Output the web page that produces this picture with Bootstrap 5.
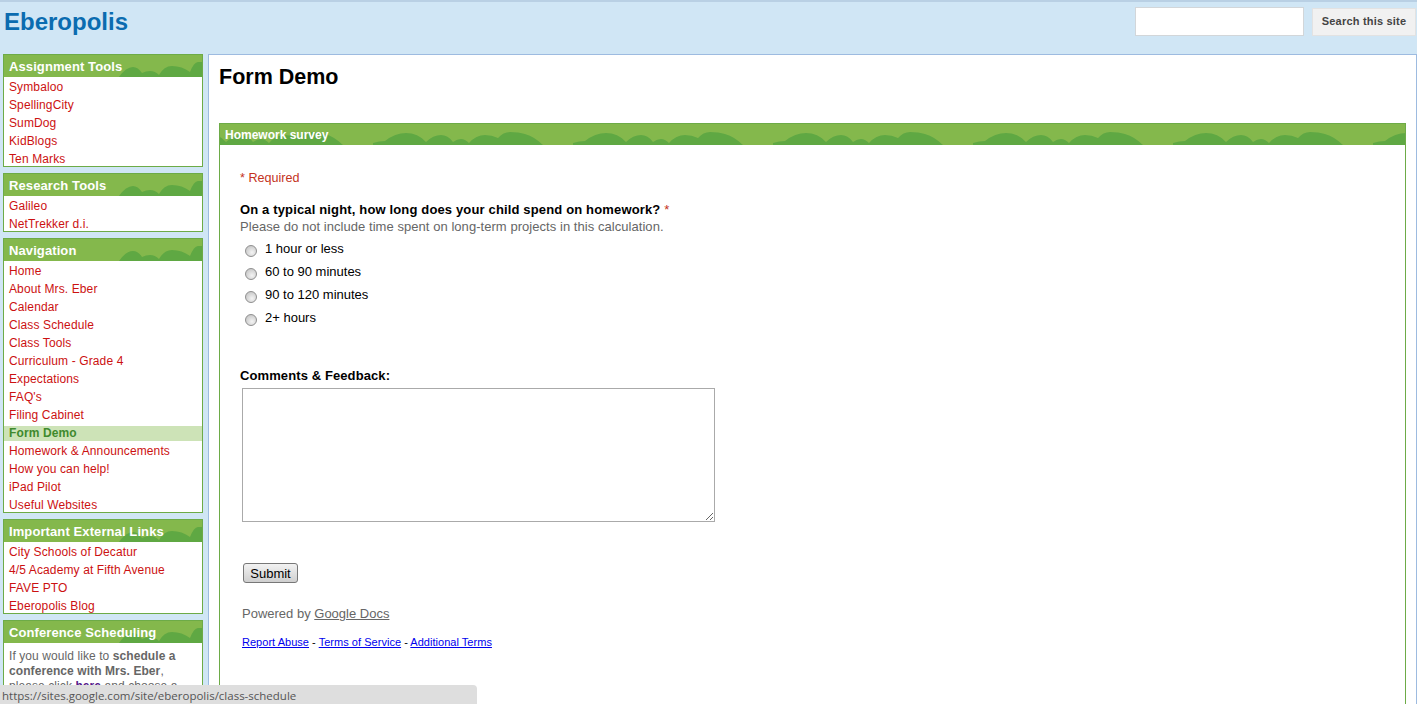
<!DOCTYPE html>
<html lang="en">
<head>
<meta charset="utf-8">
<title>Eberopolis</title>
<link href="https://cdn.jsdelivr.net/npm/bootstrap@5.3.0/dist/css/bootstrap.min.css" rel="stylesheet">
<style>
html,body{height:704px;overflow:hidden}
body{background:#d0e6f5;font-family:"Liberation Sans",Arial,sans-serif;font-size:12px;color:#000}
.site-head{height:54px;padding:7px 0 0 4px;border-top:2px solid #b9d0e4}
.site-name{font-size:24px;font-weight:700;color:#0b6cb0;line-height:26px;margin:0}
.search-box{width:169px;height:29px;border:1px solid #d2d6d9;border-radius:0;padding:0 4px;margin-top:-2px}
.search-btn{width:104px;height:28px;margin:-1px 1px 0 8px;padding:0 0 2px;background:#f1f1f1;border:1px solid #e2e2e2;border-radius:0;font-size:11px;font-weight:700;color:#444;line-height:22px;letter-spacing:.2px}
.side-col{width:200px;margin-left:3px;flex:none}
.side-panel{border:1px solid #6dab47;background:#fff;margin-bottom:6px;overflow:hidden}
.side-title{height:22px;line-height:23px;padding-left:5px;font-size:13px;letter-spacing:.1px;font-weight:700;color:#fff;margin:0;
background:#84b84c url("data:image/svg+xml,%3Csvg xmlns='http://www.w3.org/2000/svg' width='200' height='22'%3E%3Cpath fill='%235fa843' d='M115 22Q122 12 129 12Q134 12 138 18Q142 16 146 16Q151 16 155 20Q160 11 168 11Q178 11 186 17Q190 7 194 7L200 7L200 22Z'/%3E%3C/svg%3E") no-repeat 0 0}
.side-links{margin:0 0 -1px;padding:0;list-style:none;letter-spacing:.12px}
.side-links li{height:15px;line-height:15px;margin-top:3px;padding-left:5px}
.side-links a{color:#cc1111;text-decoration:none}
.side-links li.now{background:#cde3b7;font-weight:700;color:#3f8a2e}
.side-note{padding:6px 5px 0;line-height:15px;color:#666;height:60px;letter-spacing:.08px}
.side-note b{color:#666}
.side-note a{color:#551a8b;font-weight:700;text-decoration:none}
.page-box{margin-left:5px;flex:1;height:650px;background:#fff;border:1px solid #9dbbe0;border-bottom:0;padding:0 10px}
.page-title{font-size:21.5px;font-weight:700;line-height:24px;margin:10px 0 34px}
.survey-box{height:600px;border:1px solid #6dab47;border-bottom:0}
.survey-title{height:21px;line-height:22px;padding-left:5px;font-size:12px;font-weight:700;color:#fff;margin:0;
background:#84b84c url("data:image/svg+xml,%3Csvg xmlns='http://www.w3.org/2000/svg' width='200' height='21'%3E%3Cpath transform='translate(0 -1)' fill='%235fa843' d='M-3 22L0 20Q6 18 12 18Q22 10 33 10Q45 10 53 19Q60 12 68 12Q75 12 80 19Q84 16 88 16Q92 16 96 20Q103 12 112 12Q119 12 125 15Q130 9 137 9Q146 9 152 11Q162 14 170 22Z'/%3E%3C/svg%3E") repeat-x -47px 0}
.survey-body{padding:26px 0 0 20px}
.need{color:#c4321c;font-size:12.6px;line-height:15px;margin:0 0 16px}
.ask{font-size:13px;letter-spacing:.15px;font-weight:700;line-height:16px;margin:0}
.ask span{color:#c4321c;font-weight:400}
.hint{color:#666;font-size:13px;letter-spacing:.05px;line-height:16px;margin:1px 0 4px}
.pick{height:23px;padding-left:5px;gap:8px;margin:0;font-size:13px}
.pick input{width:12px;height:12px;margin:6px 0 0;flex:none;border:1px solid #8f8f8f;background:radial-gradient(circle at 60% 65%,#f4f4f4,#bcbcbc);float:none}
.pick span{line-height:15px;margin-top:2px}
.say{font-size:13px;letter-spacing:.1px;font-weight:700;line-height:16px;margin:37px 0 4px}
.say-area{display:block;width:473px;height:134px;margin-left:2px;border:1px solid #aaa;border-radius:0}
.send{display:block;width:55px;height:20px;margin:41px 0 0 3px;padding:1px 0 0;background:linear-gradient(#f2f2f2,#cfcfcf);border:1px solid #777;border-radius:3px;color:#000;font-size:13px;line-height:17px}
.made{font-size:13px;color:#666;line-height:16px;margin:23px 0 0 2px}
.made a{color:#666}
.legal{font-size:11px;letter-spacing:.03px;line-height:13px;margin:14px 0 0 2px}
.legal a{color:#00e}
.status-tip{position:fixed;left:0;bottom:0;width:477px;height:19px;background:#dedede;border-top-right-radius:4px;padding-left:2px;font-family:"Open Sans",sans-serif;font-size:11.5px;line-height:21px;color:#555}
</style>
</head>
<body>
<header class="site-head d-flex justify-content-between align-items-start">
  <h1 class="site-name">Eberopolis</h1>
  <form class="d-flex align-items-start">
    <input class="form-control search-box" type="text" aria-label="Search">
    <button class="btn search-btn" type="button">Search this site</button>
  </form>
</header>
<div class="d-flex align-items-start">
  <aside class="side-col">
    <section class="side-panel">
      <h2 class="side-title">Assignment Tools</h2>
      <ul class="side-links">
        <li><a href="#">Symbaloo</a></li><li><a href="#">SpellingCity</a></li><li><a href="#">SumDog</a></li><li><a href="#">KidBlogs</a></li><li><a href="#">Ten Marks</a></li>
      </ul>
    </section>
    <section class="side-panel">
      <h2 class="side-title">Research Tools</h2>
      <ul class="side-links">
        <li><a href="#">Galileo</a></li><li><a href="#">NetTrekker d.i.</a></li>
      </ul>
    </section>
    <section class="side-panel">
      <h2 class="side-title">Navigation</h2>
      <ul class="side-links">
        <li><a href="#">Home</a></li><li><a href="#">About Mrs. Eber</a></li><li><a href="#">Calendar</a></li><li><a href="#">Class Schedule</a></li><li><a href="#">Class Tools</a></li><li><a href="#">Curriculum - Grade 4</a></li><li><a href="#">Expectations</a></li><li><a href="#">FAQ's</a></li><li><a href="#">Filing Cabinet</a></li><li class="now">Form Demo</li><li><a href="#">Homework &amp; Announcements</a></li><li><a href="#">How you can help!</a></li><li><a href="#">iPad Pilot</a></li><li><a href="#">Useful Websites</a></li>
      </ul>
    </section>
    <section class="side-panel">
      <h2 class="side-title">Important External Links</h2>
      <ul class="side-links">
        <li><a href="#">City Schools of Decatur</a></li><li><a href="#">4/5 Academy at Fifth Avenue</a></li><li><a href="#">FAVE PTO</a></li><li><a href="#">Eberopolis Blog</a></li>
      </ul>
    </section>
    <section class="side-panel">
      <h2 class="side-title">Conference Scheduling</h2>
      <div class="side-note">If you would like to <b>schedule a conference with Mrs. Eber</b>, please click <a href="#">here</a> and choose a</div>
    </section>
  </aside>
  <main class="page-box">
    <h2 class="page-title">Form Demo</h2>
    <section class="survey-box">
      <h3 class="survey-title">Homework survey</h3>
      <form class="survey-body">
        <p class="need">* Required</p>
        <p class="ask">On a typical night, how long does your child spend on homework? <span>*</span></p>
        <p class="hint">Please do not include time spent on long-term projects in this calculation.</p>
        <label class="pick d-flex align-items-start"><input class="form-check-input" type="radio" name="hw"><span>1 hour or less</span></label>
        <label class="pick d-flex align-items-start"><input class="form-check-input" type="radio" name="hw"><span>60 to 90 minutes</span></label>
        <label class="pick d-flex align-items-start"><input class="form-check-input" type="radio" name="hw"><span>90 to 120 minutes</span></label>
        <label class="pick d-flex align-items-start"><input class="form-check-input" type="radio" name="hw"><span>2+ hours</span></label>
        <p class="say">Comments &amp; Feedback:</p>
        <textarea class="say-area" aria-label="Comments"></textarea>
        <button class="btn send" type="button">Submit</button>
        <p class="made">Powered by <a href="#">Google Docs</a></p>
        <p class="legal"><a href="#">Report Abuse</a> - <a href="#">Terms of Service</a> - <a href="#">Additional Terms</a></p>
      </form>
    </section>
  </main>
</div>
<div class="status-tip">https://sites.google.com/site/eberopolis/class-schedule</div>
<script src="https://cdn.jsdelivr.net/npm/bootstrap@5.3.0/dist/js/bootstrap.bundle.min.js"></script>
</body>
</html>
